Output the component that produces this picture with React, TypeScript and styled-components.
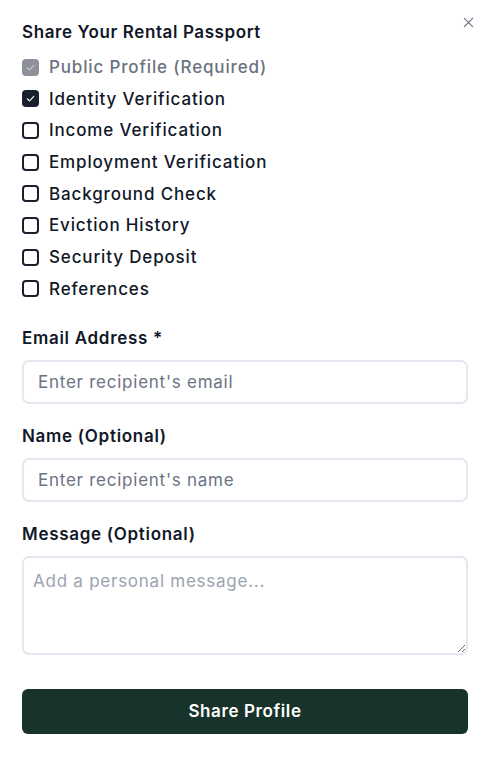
import styled, { createGlobalStyle } from 'styled-components';
import { useState } from 'react';

const GlobalStyle = createGlobalStyle`
  body {
    margin: 0;
    background: #ffffff;
    font-family: Inter, "Noto Sans", sans-serif;
    color: #111827;
  }
  * { box-sizing: border-box; }
`

const Panel = styled.div`
  position: relative;
  width: 490px;
  padding: 20px 22px 24px 22px;
  display: flex;
  flex-direction: column;
`
const CloseButton = styled.button`
  position: absolute;
  top: 16px;
  right: 16px;
  width: 12px;
  height: 12px;
  padding: 0;
  border: none;
  background: none;
  color: #6b7280;
  display: flex;
  align-items: center;
  justify-content: center;
`
const Title = styled.h2`
  margin: 0;
  font-size: 17px;
  line-height: 24px;
  font-weight: 600;
  letter-spacing: 0.6px;
  color: #111827;
`
const OptionList = styled.div`
  margin-top: 11px;
  display: flex;
  flex-direction: column;
  gap: 7.7px;
`
const OptionRow = styled.label<{ $disabled?: boolean }>`
  display: flex;
  align-items: center;
  gap: 10px;
  font-size: 17px;
  line-height: 24px;
  font-weight: 500;
  letter-spacing: 0.85px;
  color: ${p => (p.$disabled ? '#6b7280' : '#111827')};
  cursor: ${p => (p.$disabled ? 'default' : 'pointer')};
`
const Box = styled.span<{ $checked: boolean; $disabled?: boolean }>`
  width: 17px;
  height: 17px;
  flex-shrink: 0;
  border-radius: 4px;
  border: 2px solid ${p => (p.$disabled ? '#8e9199' : '#1a1f2e')};
  background: ${p => (p.$disabled ? '#8e9199' : p.$checked ? '#1a1f2e' : '#ffffff')};
  display: flex;
  align-items: center;
  justify-content: center;
`
const FieldGroup = styled.div<{ $first?: boolean }>`
  margin-top: ${p => (p.$first ? '25px' : '20px')};
  display: flex;
  flex-direction: column;
  gap: 10px;
`
const Label = styled.label`
  font-size: 17px;
  line-height: 24px;
  font-weight: 600;
  letter-spacing: 0.7px;
  color: #111827;
`
const TextInput = styled.input`
  width: 100%;
  height: 44px;
  padding: 0 14px;
  border: 2px solid #e3e7ef;
  border-radius: 7px;
  font-family: inherit;
  font-size: 17px;
  letter-spacing: 0.75px;
  color: #111827;
  outline: none;
  &::placeholder { color: #6b7384; }
`
const MessageArea = styled.textarea`
  width: 100%;
  height: 99px;
  padding: 11px 9px;
  border: 2px solid #e3e7ef;
  border-radius: 7px;
  font-family: inherit;
  font-size: 17px;
  line-height: 24px;
  letter-spacing: 0.75px;
  color: #111827;
  outline: none;
  resize: vertical;
  &::placeholder { color: #9ca3af; }
`
const SubmitButton = styled.button`
  margin-top: 34px;
  width: 100%;
  height: 45px;
  border: none;
  border-radius: 6px;
  background: #17332b;
  color: #ffffff;
  font-family: inherit;
  font-size: 17px;
  font-weight: 600;
  letter-spacing: 0.6px;
  cursor: pointer;
`

const CheckMark = ({ color }: { color: string }) => (
  <svg width="11" height="11" viewBox="0 0 12 12" fill="none">
    <path d="M2.5 6.3 L5 8.6 L9.6 3.6" stroke={color} strokeWidth="1.2" strokeLinecap="round" strokeLinejoin="round" />
  </svg>
)

const options = [
  'Identity Verification',
  'Income Verification',
  'Employment Verification',
  'Background Check',
  'Eviction History',
  'Security Deposit',
  'References',
]

const App = () => {
  const [checked, setChecked] = useState<string[]>(['Identity Verification']);

  function toggle(name: string) {
    setChecked(prev => (prev.includes(name) ? prev.filter(n => n !== name) : [...prev, name]));
  }

  return (
    <>
      <GlobalStyle />
      <Panel>
        <CloseButton aria-label="Close">
          <svg width="11" height="11" viewBox="0 0 12 12" fill="none">
            <path d="M1.5 1.5 L10.5 10.5 M10.5 1.5 L1.5 10.5" stroke="#6b7280" strokeWidth="1.3" strokeLinecap="round" />
          </svg>
        </CloseButton>
        <Title>Share Your Rental Passport</Title>
        <OptionList>
          <OptionRow $disabled>
            <Box $checked $disabled><CheckMark color="#c9ccd3" /></Box>
            Public Profile (Required)
          </OptionRow>
          {options.map(name => {
            const on = checked.includes(name);
            return (
              <OptionRow key={name} onClick={() => toggle(name)}>
                <Box $checked={on}>{on && <CheckMark color="#ffffff" />}</Box>
                {name}
              </OptionRow>
            );
          })}
        </OptionList>
        <FieldGroup $first>
          <Label>Email Address *</Label>
          <TextInput type="email" placeholder="Enter recipient's email" />
        </FieldGroup>
        <FieldGroup>
          <Label>Name (Optional)</Label>
          <TextInput type="text" placeholder="Enter recipient's name" />
        </FieldGroup>
        <FieldGroup>
          <Label>Message (Optional)</Label>
          <MessageArea placeholder="Add a personal message..." />
        </FieldGroup>
        <SubmitButton>Share Profile</SubmitButton>
      </Panel>
    </>
  )
}
export default App;
